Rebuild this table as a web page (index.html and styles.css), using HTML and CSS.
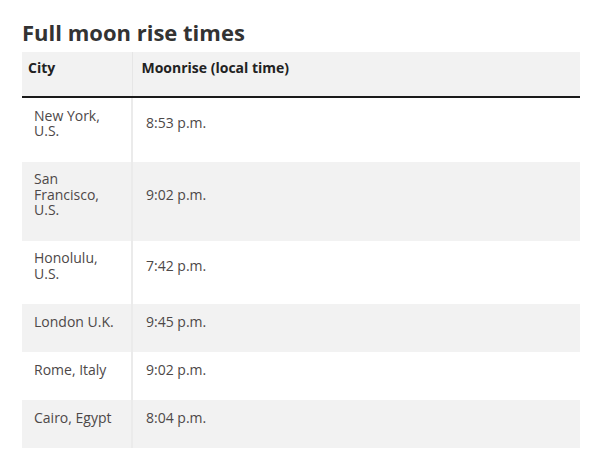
FILE: index.html
```html
<!DOCTYPE html>
<html>
<head>
<meta charset="utf-8">
<link rel="stylesheet" href="styles.css">
</head>
<body>
<div class="wrap">
  <h2 class="title">Full moon rise times</h2>
  <table class="moon">
    <colgroup><col class="col1"><col class="col2"></colgroup>
    <thead>
      <tr><th class="c1">City</th><th class="c2">Moonrise (local time)</th></tr>
    </thead>
    <tbody>
      <tr><td class="c1">New York, U.S.</td><td class="c2">8:53 p.m.</td></tr>
      <tr class="alt"><td class="c1">San Francisco, U.S.</td><td class="c2">9:02 p.m.</td></tr>
      <tr><td class="c1">Honolulu, U.S.</td><td class="c2">7:42 p.m.</td></tr>
      <tr class="alt"><td class="c1">London U.K.</td><td class="c2">9:45 p.m.</td></tr>
      <tr><td class="c1">Rome, Italy</td><td class="c2">9:02 p.m.</td></tr>
      <tr class="alt"><td class="c1">Cairo, Egypt</td><td class="c2">8:04 p.m.</td></tr>
    </tbody>
  </table>
</div>
</body>
</html>
```

FILE: styles.css
```css
html, body {
  margin: 0;
  padding: 0;
  background: #ffffff;
}
body {
  font-family: "Open Sans", "Liberation Sans", sans-serif;
}
.wrap {
  padding: 19px 20px 0 22px;
}
.title {
  margin: 0 0 6px 0;
  font-size: 22px;
  line-height: 27px;
  font-weight: 700;
  color: #333333;
}
.moon {
  width: 558px;
  border-collapse: collapse;
  table-layout: fixed;
}
.col1 {
  width: 110px;
}
.moon th {
  background: #f2f2f2;
  color: #222222;
  font-size: 14px;
  font-weight: 700;
  line-height: 15.5px;
  text-align: left;
  vertical-align: top;
  padding: 8px 6px 20.5px 6px;
  border-bottom: 2px solid #1a1a1a;
}
.moon th.c1 {
  border-right: 1px solid #e6e6e6;
}
.moon th.c2 {
  padding-left: 9px;
}
.moon td {
  font-size: 14px;
  line-height: 15.5px;
  color: #4d4848;
  vertical-align: middle;
  padding: 9.5px 12px 23px 12px;
}
.moon td.c2 {
  padding-left: 13px;
}
.moon td.c1 {
  border-right: 2px solid #ebebeb;
}
.moon tr.alt td {
  background: #f2f2f2;
}
```
